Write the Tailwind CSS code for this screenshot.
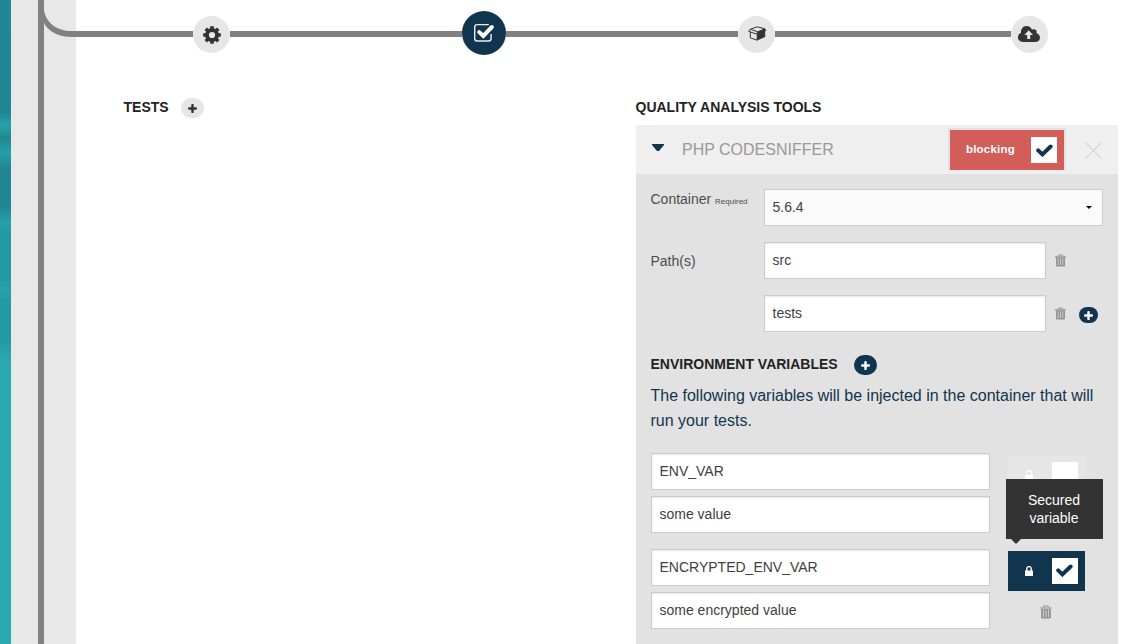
<!DOCTYPE html>
<html lang="en">
<head>
<meta charset="utf-8">
<title>Quality analysis tools</title>
<script src="https://cdn.jsdelivr.net/npm/@tailwindcss/browser@4"></script>
</head>
<body class="relative flex h-[644px] w-[1135px] overflow-hidden bg-white font-['Liberation_Sans',Arial,sans-serif] text-[14px] text-[#4d4d4d]">
<svg class="hidden" aria-hidden="true">
  <symbol id="trash" viewBox="0 0 11 12">
    <path d="M3.2 1.7V1.2Q3.2.5 4 .5H7Q7.8.5 7.8 1.2V1.7" fill="none" stroke="currentColor"/>
    <path d="M0 1.8H11V2.9H0zM1 3.2H10V11Q10 12 9 12H2Q1 12 1 11z" fill="currentColor"/>
    <path d="M3.2 4V10.6M5.5 4V10.6M7.8 4V10.6" stroke="#e2e2e2" stroke-width=".7"/>
  </symbol>
  <symbol id="plus" viewBox="0 0 9 9"><path d="M4.5 1.1V7.9M1.1 4.5H7.9" stroke="currentColor" stroke-width="2.4" stroke-linecap="round"/></symbol>
  <symbol id="check" viewBox="0 0 17 13"><path d="M2.2 6.4L6.4 10.4L14.6 2.5" fill="none" stroke="currentColor" stroke-width="4" stroke-linecap="round" stroke-linejoin="miter"/></symbol>
</svg>

<div class="w-[11px] shrink-0 bg-[linear-gradient(180deg,#218795_0px,#218692_113px,#25a2a9_125px,#218891_138px,#25a0a7_153px,#218692_168px,#218692_207px,#25a1a8_222px,#239aa2_232px,#239aa2_280px,#26a3aa_290px,#2399a1_302px,#2399a1_340px,#28a9ae_358px,#28a9ae_644px)]"></div>
<aside class="flex w-[65px] shrink-0 bg-[#e8e8e8] pl-[27px]">
  <div class="w-1.5 bg-[#818181]"></div>
  <svg class="h-10 w-8" viewBox="0 0 32 40"><path d="M0 10C2 23 13 31 28 31H32V37H28C14 37 4 31 0 23z" fill="#818181"/></svg>
</aside>

<main class="flex w-[1042px] shrink-0 flex-col">
  <nav class="flex h-[68px] w-full shrink-0 items-center">
    <div class="h-1.5 w-[117px] bg-[#818181]"></div>
    <div class="mt-px flex size-[37px] items-center justify-center rounded-full bg-[#e6e6e6]">
      <svg class="size-[18px]" viewBox="-9 -9 18 18" fill="none" stroke="#333"><circle r="5" stroke-width="3.8"/><path d="M0-6V-8.8M0 6V8.8M-6 0H-8.8M6 0H8.8M-4.2-4.2L-6.3-6.3M4.2-4.2L6.3-6.3M-4.2 4.2L-6.3 6.3M4.2 4.2L6.3 6.3" stroke-width="3.6"/></svg>
    </div>
    <div class="h-1.5 w-[232px] bg-[#818181]"></div>
    <div class="-mt-0.5 flex size-11 items-center justify-center rounded-full bg-[#12354f]">
      <svg class="size-[22px]" viewBox="0 0 22 22" fill="none" stroke="#fff"><path d="M15.8 2.6H4.3Q1.7 2.6 1.7 5.2V16.5Q1.7 19 4.3 19H15.5Q18.1 19 18.1 16.5V12" stroke="#e8edf0" stroke-width="1.4"/><path d="M6.2 10.1L10.3 13.9L18.9 5" stroke-width="4" stroke-linecap="round"/></svg>
    </div>
    <div class="h-1.5 w-[232px] bg-[#818181]"></div>
    <div class="mt-px flex size-[37px] items-center justify-center rounded-full bg-[#e6e6e6]">
      <svg class="mb-0.5 ml-px h-[15px] w-[19px]" viewBox="0 0 19 15"><g fill="none" stroke="#333" stroke-width="1"><path d="M2.3 6V11.8L9.2 14.2V7.8"/><path d="M2.3 3.3L9.3.8L16.8 2.8L9.8 5.8zM2.3 3.3L.6 5.3L8 8L9.8 5.8"/></g><path d="M9.8 5.8L16.9 2.8L18.5 4.3L17.2 5V11L9.2 14.4V7.5z" fill="#333"/></svg>
    </div>
    <div class="h-1.5 w-[236px] bg-[#818181]"></div>
    <div class="mt-px flex size-[37px] items-center justify-center rounded-full bg-[#e6e6e6]">
      <svg class="mb-px mr-px h-4 w-[22px]" viewBox="0 0 22 16"><path d="M5 16C2 16 0 14 0 11.3C0 9.1 1.2 7.5 3 6.8C2.8 2.8 5 0 8.4 0C11 0 13 1.3 14 3.7C16.8 2.3 19.4 4.1 18.6 7.2C20.8 7.8 22 9.6 22 11.6C22 14.2 20.2 16 17.6 16z" fill="#333"/><path d="M10.7 4.2L15 9H12.2V13H9.2V9H6.4z" fill="#e6e6e6"/></svg>
    </div>
  </nav>

  <div class="flex flex-1 items-start pl-12 pt-[29px]">
    <section class="flex w-[512px] shrink-0 items-start">
      <h2 class="-ml-[0.5px] text-[14px] leading-5 font-bold text-[#222]">TESTS</h2>
      <button class="ml-3 mt-px flex h-5 w-[23px] items-center justify-center rounded-[10px] bg-[#e6e6e6] text-[#333]"><svg class="size-[9px]"><use href="#plus"/></svg></button>
    </section>

    <section class="w-[482px] shrink-0">
      <h2 class="-ml-[0.5px] h-7 text-[14px] leading-5 font-bold text-[#222]">QUALITY ANALYSIS TOOLS</h2>
      <header class="flex h-[49px] bg-[#efefef] pl-4">
        <svg class="mt-[19px] h-[7px] w-3" viewBox="0 0 12 7"><path d="M0 0H12V1L7 7H5L0 1z" fill="#12354f"/></svg>
        <span class="ml-[18px] w-[266px] pt-[15px] text-base leading-5 text-[#999]">PHP CODESNIFFER</span>
        <div class="mt-[3px] flex h-[42px] w-[118px] items-center border-x-2 border-t-2 border-[#e2e2e2] bg-[#d35d59] pl-4">
          <span class="w-[65px] text-[11.5px] font-bold tracking-[0.2px] text-white">blocking</span>
          <span class="flex size-[26px] items-center justify-center bg-white text-[#12354f]"><svg class="h-[13px] w-[17px]"><use href="#check"/></svg></span>
        </div>
        <svg class="ml-[19px] mt-[17px] size-[17px]" viewBox="0 0 17 17"><path d="M.5.5L16.5 16.5M16.5.5L.5 16.5" stroke="#c9c9c9"/></svg>
      </header>

      <div class="h-[480px] bg-[#e2e2e2] pl-[15px] pr-[15px] pt-[15px]">
        <div class="flex h-[53px]">
          <label class="-ml-[0.5px] w-[113.5px] leading-5">Container <span class="text-[8px]">Required</span></label>
          <div class="flex h-[37px] w-[339px] items-center justify-between border border-[#ccc] bg-[#fafafa] px-[7.5px] text-[#404040]">
            <span>5.6.4</span><svg class="mr-[3px] h-[3px] w-1.5" viewBox="0 0 6 3"><path d="M0 0H6L3 3z" fill="#000"/></svg>
          </div>
        </div>
        <div class="flex h-[53px]">
          <label class="-ml-[0.5px] w-[113.5px] pt-[9px] leading-5">Path(s)</label>
          <div class="flex h-[37px] w-[282px] items-center border border-[#ccc] bg-white px-[7.5px] text-[#404040] shadow-[inset_0_1px_2px_rgba(0,0,0,0.1)]">src</div>
          <svg class="ml-[9px] mt-3 h-[13px] w-[11px] text-[#949494]"><use href="#trash"/></svg>
        </div>
        <div class="flex h-[53px] pl-[113px]">
          <div class="flex h-[37px] w-[282px] items-center border border-[#ccc] bg-white px-[7.5px] text-[#404040] shadow-[inset_0_1px_2px_rgba(0,0,0,0.1)]">tests</div>
          <svg class="ml-[9px] mt-3 h-[13px] w-[11px] text-[#949494]"><use href="#trash"/></svg>
          <button class="ml-[13px] mt-3 flex h-4 w-[19px] items-center justify-center rounded-lg bg-[#12354f] text-white"><svg class="size-[9px]"><use href="#plus"/></svg></button>
        </div>
        <div class="flex h-[35px] pt-1.5">
          <h3 class="-ml-[0.5px] leading-5 text-[14px] font-bold whitespace-nowrap text-[#222]">ENVIRONMENT VARIABLES</h3>
          <button class="ml-4 mt-px flex h-5 w-[23px] items-center justify-center rounded-[10px] bg-[#12354f] text-white"><svg class="size-[9px]"><use href="#plus"/></svg></button>
        </div>
        <p class="-ml-[0.5px] h-[70px] text-base leading-[25px] text-[#12354f]">The following variables will be injected in the container that will run your tests.</p>
        <div class="flex h-24">
          <div class="flex w-[339px] flex-col gap-1.5 text-[#404040]">
            <div class="flex h-[37px] items-center border border-[#ccc] bg-white px-[7.5px] shadow-[inset_0_1px_2px_rgba(0,0,0,0.1)]">ENV_VAR</div>
            <div class="flex h-[37px] items-center border border-[#ccc] bg-white px-[7.5px] shadow-[inset_0_1px_2px_rgba(0,0,0,0.1)]">some value</div>
          </div>
          <div class="relative ml-[18px] mt-0.5 flex h-10 w-[77px] items-center bg-[#e6e6e6] pl-[17px]">
            <svg class="h-2.5 w-2" viewBox="0 0 8 10"><path d="M0 4.5H8V10H0z" fill="#fff"/><path d="M6.4 5V2.6A2.1 2 0 0 0 2 2.6V3.2" fill="none" stroke="#fff" stroke-width="1.4"/></svg>
            <span class="ml-[19px] size-[26px] bg-white"></span>
            <div class="absolute top-6 -left-0.5 h-[60px] w-[97px] bg-[#333] pt-3 pr-px text-center leading-[18px] text-white">Secured<br>variable
              <svg class="absolute top-[60px] left-[5px] h-[5px] w-2.5" viewBox="0 0 10 5"><path d="M0 0H10L5 5z" fill="#333"/></svg>
            </div>
          </div>
        </div>
        <div class="flex h-24">
          <div class="flex w-[339px] flex-col gap-1.5 text-[#404040]">
            <div class="flex h-[37px] items-center border border-[#ccc] bg-white px-[7.5px] shadow-[inset_0_1px_2px_rgba(0,0,0,0.1)]">ENCRYPTED_ENV_VAR</div>
            <div class="flex h-[37px] items-center border border-[#ccc] bg-white px-[7.5px] shadow-[inset_0_1px_2px_rgba(0,0,0,0.1)]">some encrypted value</div>
          </div>
          <div class="ml-[18px] mt-0.5 w-[77px]">
            <div class="flex h-10 items-center bg-[#12354f] pl-[17px]">
              <svg class="h-2.5 w-2" viewBox="0 0 8 10"><path d="M0 4.5H8V10H0z" fill="#fff"/><path d="M1.8 5V2.8A2.2 2.2 0 0 1 6.2 2.8V5" fill="none" stroke="#fff" stroke-width="1.4"/></svg>
              <span class="ml-[19px] flex size-[26px] items-center justify-center bg-white text-[#12354f]"><svg class="mr-0.5 mb-px h-[13px] w-[17px]"><use href="#check"/></svg></span>
            </div>
            <svg class="ml-8 mt-3.5 h-[14px] w-3 text-[#949494]"><use href="#trash"/></svg>
          </div>
        </div>
      </div>
    </section>
  </div>
</main>
</body>
</html>
